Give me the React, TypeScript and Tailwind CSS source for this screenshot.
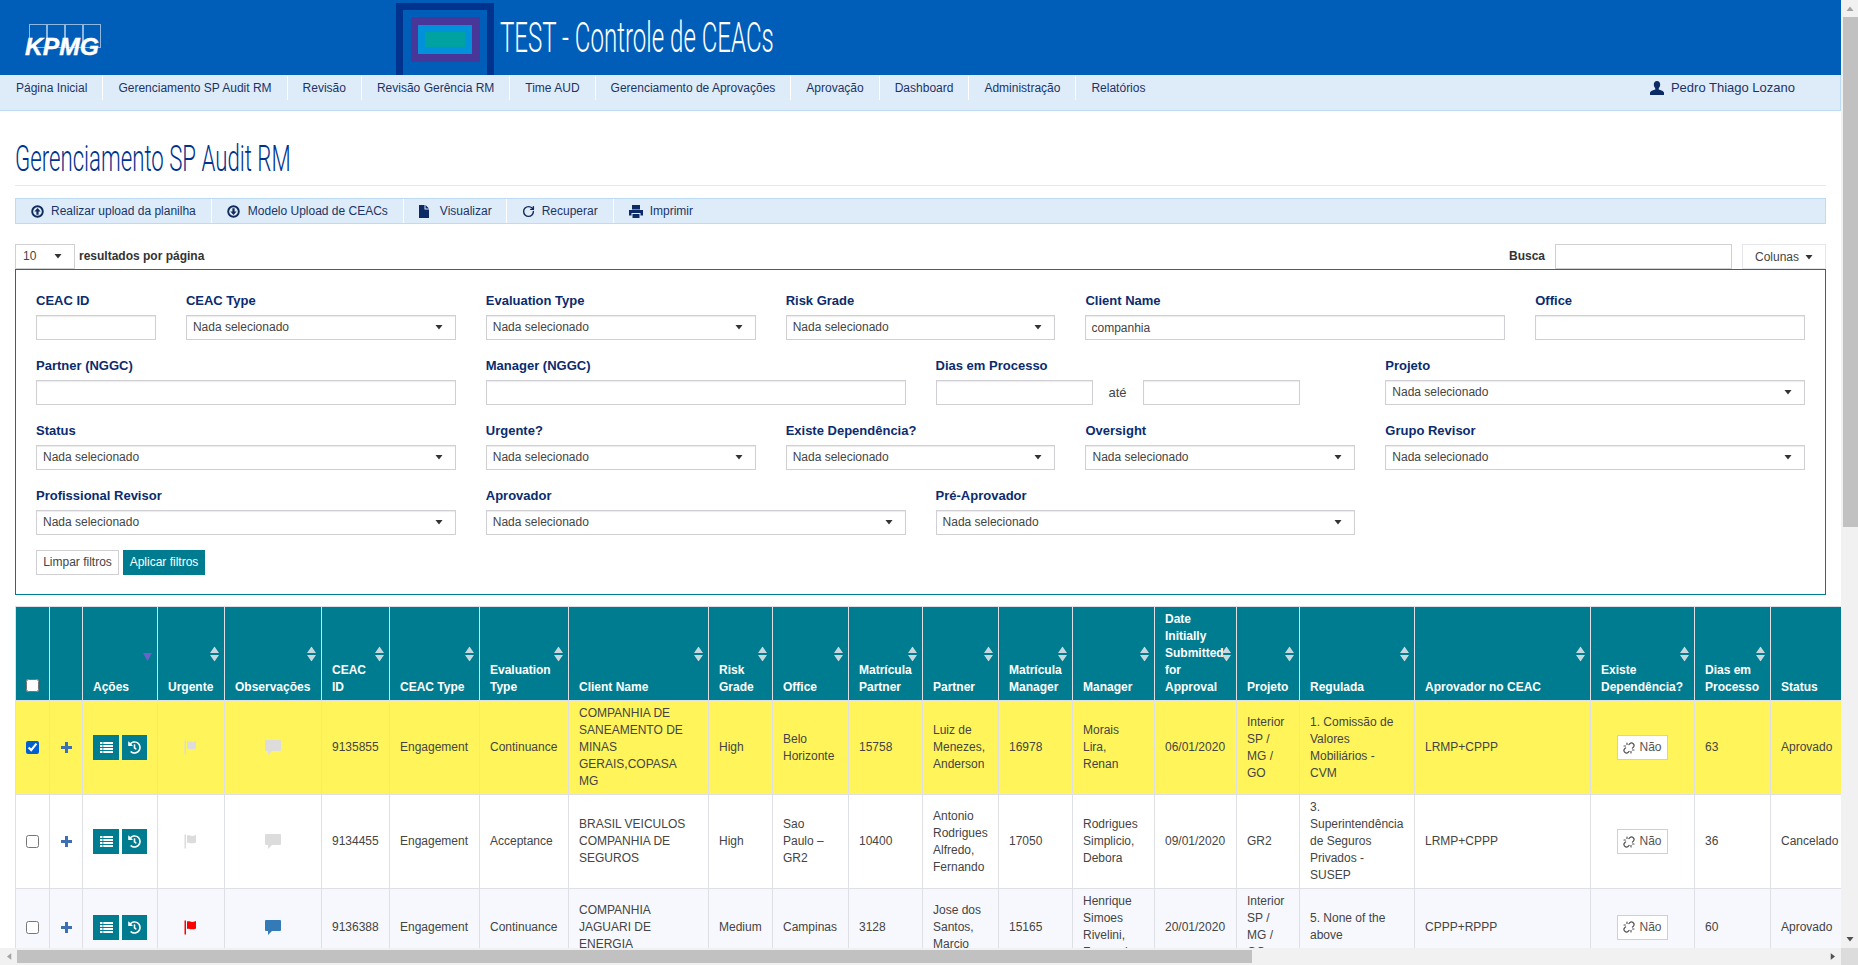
import React from "react";
import { RotateCw, Unlink } from "lucide-react";
import { FaHistory } from "react-icons/fa";

const navItems = ["Página Inicial","Gerenciamento SP Audit RM","Revisão","Revisão Gerência RM","Time AUD","Gerenciamento de Aprovações","Aprovação","Dashboard","Administração","Relatórios"];

function Caret({ className = "" }: { className?: string }) {
  return <svg width="8" height="5" viewBox="0 0 8 5" className={className}><path d="M0.500 0h7L4 4.500z" fill="currentColor" /></svg>;
}
function CircleArrow({ down }: { down?: boolean }) {
  return (
    <svg width="13" height="13" viewBox="0 0 13 13">
      <circle cx="6.5" cy="6.5" r="5.3" fill="none" stroke="#0f2a5c" strokeWidth="1.9" />
      <path d={down ? "M6.5 10L3.4 6.6h2V3.2h2.2v3.4h2z" : "M6.5 3L3.4 6.4h2v3.4h2.2V6.4h2z"} fill="#0f2a5c" />
    </svg>
  );
}
function FileIcon() {
  return <svg width="10" height="13" viewBox="0 0 10 13"><path d="M0 0h5.500v4.500H10V13H0zM6.500 0L10 3.500H6.500z" fill="#0b2a66" /></svg>;
}
function PrintIcon() {
  return (
    <svg width="14" height="13" viewBox="0 0 14 13">
      <path d="M3 0h8v4.500H3zM0 5h14v5.500h-2.500V8h-9v2.500H0zM3.500 9h7v4h-7z" fill="#0b2a66" />
    </svg>
  );
}
function UserIcon() {
  return <svg width="14" height="14" viewBox="0 0 14 14"><path d="M7 0c2 0 3.200 1.500 3.200 3.600 0 1.700-.8 3-1.500 3.800v1.200c1.800.7 4.300 1.300 5.300 2.800V14H0v-2.600c1-1.500 3.500-2.100 5.300-2.800V7.400C4.600 6.600 3.800 5.300 3.800 3.600 3.800 1.500 5 0 7 0z" fill="#0b2a66" /></svg>;
}
function Flag({ color }: { color: string }) {
  return (
    <svg width="15" height="15" viewBox="0 0 15 15" className="mx-auto">
      <rect x="0.500" y="0.500" width="1.500" height="14" fill={color} />
      <path d="M3 1.500c2-.8 3.500.6 5.500.4 1.500-.1 2.500-.5 3.500-.9v7.500c-1.500.8-3 1-4.500.8-2-.3-3-1-4.500-.4z" fill={color} />
    </svg>
  );
}
function Comment({ color }: { color: string }) {
  return <svg width="16" height="15" viewBox="0 0 16 15" className="mx-auto"><path d="M1 0h14a1 1 0 0 1 1 1v9a1 1 0 0 1-1 1H7l-4 4v-4H1a1 1 0 0 1-1-1V1a1 1 0 0 1 1-1z" fill={color} /></svg>;
}
function ListIcon() {
  return (
    <svg width="13" height="11" viewBox="0 0 13 11">
      <path d="M0 0h13v2H0zM0 3h13v2H0zM0 6h13v2H0zM0 9h13v2H0z" fill="#fff" />
      <path d="M2.500 0h.8v11h-.8z" fill="#007c91" />
    </svg>
  );
}
function PlusIcon() {
  return <svg width="11" height="11" viewBox="0 0 11 11" className="block"><path d="M4 0h3v4h4v3H7v4H4V7H0V4h4z" fill="#3d70b2" /></svg>;
}
function Sort() {
  return (
    <svg width="9" height="15" viewBox="0 0 9 15" className="absolute right-[5px] top-1/2 -translate-y-1/2">
      <path d="M4.500 0L9 6.500H0zM0 8.500h9L4.500 15z" fill="#c6d8de" />
    </svg>
  );
}

function Select({ text = "Nada selecionado" }: { text?: string }) {
  return (
    <div className="h-[25px] flex items-center justify-between pl-[6px] pr-[12px] border border-[#cfcfd4] bg-white shadow-[inset_0_1px_1px_rgba(0,0,0,0.08)] text-[#444]">
      <span>{text}</span>
      <Caret className="text-[#333]" />
    </div>
  );
}
function Input({ value, className = "" }: { value?: string; className?: string }) {
  return <input readOnly value={value ?? ""} className={`h-[25px] w-full px-[5px] border border-[#cfcfd4] bg-white shadow-[inset_0_1px_1px_rgba(0,0,0,0.08)] text-[#444] outline-none ${className}`} />;
}
function Field({ label, span, children }: { label: string; span: string; children: React.ReactNode }) {
  return (
    <div className={`${span} h-[65px]`}>
      <label className="block h-[24px] pt-[1px] leading-[18px] text-[13px] font-bold text-[#0a2c6e]">{label}</label>
      {children}
    </div>
  );
}

const columns: { label: string; w: string; sort?: boolean }[] = [
  { label: "", w: "w-[34px]" },
  { label: "", w: "w-[33px]" },
  { label: "Ações", w: "w-[75px]" },
  { label: "Urgente", w: "w-[67px]", sort: true },
  { label: "Observações", w: "w-[97px]", sort: true },
  { label: "CEAC\nID", w: "w-[68px]", sort: true },
  { label: "CEAC Type", w: "w-[90px]", sort: true },
  { label: "Evaluation\nType", w: "w-[89px]", sort: true },
  { label: "Client Name", w: "w-[140px]", sort: true },
  { label: "Risk\nGrade", w: "w-[64px]", sort: true },
  { label: "Office", w: "w-[76px]", sort: true },
  { label: "Matrícula\nPartner", w: "w-[74px]", sort: true },
  { label: "Partner", w: "w-[76px]", sort: true },
  { label: "Matrícula\nManager", w: "w-[74px]", sort: true },
  { label: "Manager", w: "w-[82px]", sort: true },
  { label: "Date\nInitially\nSubmitted\nfor\nApproval", w: "w-[82px]", sort: true },
  { label: "Projeto", w: "w-[63px]", sort: true },
  { label: "Regulada", w: "w-[115px]", sort: true },
  { label: "Aprovador no CEAC", w: "w-[176px]", sort: true },
  { label: "Existe\nDependência?", w: "w-[104px]", sort: true },
  { label: "Dias em\nProcesso", w: "w-[76px]", sort: true },
  { label: "Status", w: "w-[120px]", sort: true },
];

const rows = [
  { bg: "bg-[#fff55a]", checked: true, flag: "#dcdcdc", comment: "#dcdcdc", cells: ["9135855","Engagement","Continuance","COMPANHIA DE\nSANEAMENTO DE\nMINAS\nGERAIS,COPASA\nMG","High","Belo\nHorizonte","15758","Luiz de\nMenezes,\nAnderson","16978","Morais\nLira,\nRenan","06/01/2020","Interior\nSP /\nMG /\nGO","1. Comissão de\nValores\nMobiliários -\nCVM","LRMP+CPPP"], tail: ["63","Aprovado"] },
  { bg: "bg-white", checked: false, flag: "#dcdcdc", comment: "#dcdcdc", cells: ["9134455","Engagement","Acceptance","BRASIL VEICULOS\nCOMPANHIA DE\nSEGUROS","High","Sao\nPaulo –\nGR2","10400","Antonio\nRodrigues\nAlfredo,\nFernando","17050","Rodrigues\nSimplicio,\nDebora","09/01/2020","GR2","3.\nSuperintendência\nde Seguros\nPrivados -\nSUSEP","LRMP+CPPP"], tail: ["36","Cancelado"] },
  { bg: "bg-[#f7f8fd]", checked: false, flag: "#ff0000", comment: "#337ab7", cells: ["9136388","Engagement","Continuance","COMPANHIA\nJAGUARI DE\nENERGIA","Medium","Campinas","3128","Jose dos\nSantos,\nMarcio","15165","Henrique\nSimoes\nRivelini,\nFernando","20/01/2020","Interior\nSP /\nMG /\nGO","5. None of the\nabove","CPPP+RPPP"], tail: ["60","Aprovado"] },
];

const cell = "border border-[#dfe0e6] py-1 align-middle whitespace-pre-line";
const td = `${cell} px-[10px]`;

const tools = [
  { icon: <CircleArrow />, t: "Realizar upload da planilha", slot: "w-[20px]", pad: "pr-[15px]" },
  { icon: <CircleArrow down />, t: "Modelo Upload de CEACs", slot: "w-[21px]", pad: "pr-[15px]" },
  { icon: <FileIcon />, t: "Visualizar", slot: "w-[21px]", pad: "pr-[14px]" },
  { icon: <RotateCw size={13} strokeWidth={2.6} color="#0f2a5c" />, t: "Recuperar", slot: "w-[20px]", pad: "pr-[15px]" },
  { icon: <PrintIcon />, t: "Imprimir", slot: "w-[21px]", pad: "pr-[15px]" },
];

export default function App() {
  return (
    <div className="h-screen flex flex-col overflow-hidden bg-white font-['Liberation_Sans',Arial,sans-serif] text-[12px] leading-[17px] text-[#444]">
      <div className="flex-1 min-h-0 flex">
        <main className="w-[1841px] shrink-0 overflow-hidden">
          <header className="h-[75px] bg-[#005eb8] flex items-end">
            <svg width="82" height="34" viewBox="0 0 82 34" className="ml-[24px] mb-[17px] shrink-0 overflow-visible">
              <g fill="none" stroke="#8fb7e0" strokeWidth="1">
                <rect x="5.500" y="0.500" width="17" height="23" />
                <rect x="23.500" y="0.500" width="17" height="23" />
                <rect x="41.500" y="0.500" width="17" height="23" />
                <rect x="59.500" y="0.500" width="17" height="23" />
              </g>
              <text x="1" y="31" textLength="74" lengthAdjust="spacingAndGlyphs" fontFamily="'Liberation Sans',sans-serif" fontWeight="700" fontStyle="italic" fontSize="23" fill="#fff" stroke="#fff" strokeWidth="0.4">KPMG</text>
            </svg>
            <svg width="98" height="72" viewBox="0 0 98 72" className="ml-[290px] shrink-0">
              <rect width="98" height="72" fill="#00338d" />
              <rect x="7" y="7" width="84" height="65" fill="#005eb8" />
              <rect x="15" y="14" width="69" height="45" fill="#483698" />
              <rect x="22" y="22" width="54" height="29" fill="#0091da" />
              <rect x="29" y="29" width="40" height="15" fill="#00a3a1" />
            </svg>
            <h1 className="ml-[6px] self-center inline-block origin-left scale-x-[0.573] whitespace-nowrap font-['Roboto',sans-serif] font-light text-[42px] leading-[48px] text-white">TEST - Controle de CEACs</h1>
          </header>

          <nav className="h-[36px] pt-[1px] pl-[1px] flex items-start bg-[#deecf9] border-b border-r border-[#bcdcf5] text-[#1b3468]">
            {navItems.map((n, i) => (
              <a key={n} className={`h-[24px] flex items-center px-[15px] ${i < navItems.length - 1 ? "border-r border-white" : ""}`}>{n}</a>
            ))}
            <div className="ml-auto mr-[45px] h-[23px] flex items-center gap-[7px] text-[13px]">
              <UserIcon />
              <span>Pedro Thiago Lozano</span>
            </div>
          </nav>

          <div className="pl-[15px] pr-[15px]">
            <div className="h-[75px] flex items-end pb-[4px] border-b border-[#e6e8ee]">
              <h2 className="inline-block origin-left scale-x-[0.617] whitespace-nowrap font-['Roboto',sans-serif] font-light text-[36px] leading-[44px] text-[#00338d]">Gerenciamento SP Audit RM</h2>
            </div>

            <div className="mt-[12px] h-[26px] flex bg-[#deecf9] border border-[#bcdcf5] text-[#1b3468]">
              {tools.map((b, i) => (
                <div key={b.t} className={`flex items-center pl-[15px] ${b.pad} ${i < 4 ? "border-r border-white" : ""}`}>
                  <span className={`${b.slot} flex items-center`}>{b.icon}</span>
                  <span>{b.t}</span>
                </div>
              ))}
            </div>

            <div className="mt-[20px] h-[25px] flex items-center">
              <div className="h-[25px] w-[60px] flex items-center justify-between pl-[7px] pr-[12px] border border-[#cfcfd4] bg-white text-[#444]">
                <span>10</span><Caret className="text-[#333]" />
              </div>
              <span className="ml-[4px] font-bold text-[#333]">resultados por página</span>
              <span className="ml-auto mr-[10px] font-bold text-[#333]">Busca</span>
              <input readOnly className="h-[25px] w-[177px] border border-[#cfcfd4] bg-white outline-none" />
              <button className="ml-[10px] h-[25px] w-[84px] pt-[1px] flex items-center justify-center gap-[6px] border border-[#e4e6ec] bg-white text-[#444]">
                Colunas <Caret className="text-[#333]" />
              </button>
            </div>

            <section className="h-[326px] border border-[#007c91] pl-[20px] pr-[19.9px] pt-[21px]">
              <div className="grid grid-cols-12 gap-x-[30px]">
                <Field label="CEAC ID" span="col-span-1"><Input /></Field>
                <Field label="CEAC Type" span="col-span-2"><Select /></Field>
                <Field label="Evaluation Type" span="col-span-2"><Select /></Field>
                <Field label="Risk Grade" span="col-span-2"><Select /></Field>
                <Field label="Client Name" span="col-span-3"><Input value="companhia" /></Field>
                <Field label="Office" span="col-span-2"><Input /></Field>

                <Field label="Partner (NGGC)" span="col-span-3"><Input /></Field>
                <Field label="Manager (NGGC)" span="col-span-3"><Input /></Field>
                <Field label="Dias em Processo" span="col-span-3">
                  <div className="flex items-center w-[364px]">
                    <Input className="w-[157px]" />
                    <span className="w-[50px] shrink-0 text-center text-[13px] text-[#444]">até</span>
                    <Input className="w-[157px]" />
                  </div>
                </Field>
                <Field label="Projeto" span="col-span-3"><Select /></Field>

                <Field label="Status" span="col-span-3"><Select /></Field>
                <Field label="Urgente?" span="col-span-2"><Select /></Field>
                <Field label="Existe Dependência?" span="col-span-2"><Select /></Field>
                <Field label="Oversight" span="col-span-2"><Select /></Field>
                <Field label="Grupo Revisor" span="col-span-3"><Select /></Field>

                <Field label="Profissional Revisor" span="col-span-3"><Select /></Field>
                <Field label="Aprovador" span="col-span-3"><Select /></Field>
                <Field label="Pré-Aprovador" span="col-span-3"><Select /></Field>
              </div>
              <div className="flex gap-[4px] -mt-[1px]">
                <button className="h-[25px] w-[83px] border border-[#cfcfd4] bg-white text-[#444]">Limpar filtros</button>
                <button className="h-[25px] w-[82px] bg-[#007c91] text-white">Aplicar filtros</button>
              </div>
            </section>
          </div>

          <div className="mt-[11px] pl-[15px] overflow-hidden">
            <table className="table-fixed border-collapse w-[1875px] max-w-none">
              <colgroup>
                {columns.map((c, i) => <col key={i} className={c.w} />)}
              </colgroup>
              <thead>
                <tr className="bg-[#007c91] text-white">
                  {columns.map((c, i) => (
                    <th key={i} className="relative border border-[#dfe0e6] px-[10px] py-1 align-bottom text-left font-bold whitespace-pre-line">
                      {i === 0 ? <input type="checkbox" readOnly className="block mx-auto mb-[4px]" /> : c.label}
                      {c.sort && <Sort />}
                      {i === 2 && (
                        <svg width="9" height="8" viewBox="0 0 9 8" className="absolute right-[5px] top-[46px]"><path d="M0 0h9L4.500 8z" fill="#6a62c9" /></svg>
                      )}
                    </th>
                  ))}
                </tr>
              </thead>
              <tbody>
                {rows.map((r) => (
                  <tr key={r.cells[0]} className={r.bg}>
                    <td className={`${cell} text-center`}>
                      <input type="checkbox" readOnly checked={r.checked} className="align-middle accent-[#0060d0]" />
                    </td>
                    <td className={`${cell} pl-[11px]`}><PlusIcon /></td>
                    <td className={cell}>
                      <div className="flex justify-center gap-[3px]">
                        <span className="w-[26px] h-[25px] flex items-center justify-center bg-[#007c91]"><ListIcon /></span>
                        <span className="w-[25px] h-[25px] flex items-center justify-center bg-[#007c91]"><FaHistory size={13} color="#fff" /></span>
                      </div>
                    </td>
                    <td className={cell}><Flag color={r.flag} /></td>
                    <td className={cell}><Comment color={r.comment} /></td>
                    {r.cells.map((c, i) => <td key={i} className={td}>{c}</td>)}
                    <td className={cell}>
                      <div className="mx-auto w-[51px] h-[25px] flex items-center justify-center gap-[4px] border border-[#cfcfd4] bg-white text-[#555]">
                        <Unlink size={12} strokeWidth={2.4} color="#555" />Não
                      </div>
                    </td>
                    {r.tail.map((c) => <td key={c} className={td}>{c}</td>)}
                  </tr>
                ))}
              </tbody>
            </table>
          </div>
        </main>

        <aside className="w-[17px] bg-[#f1f1f1] flex flex-col items-end">
          <div className="h-[17px] w-full flex items-center justify-center text-[#a3a3a3]"><Caret className="rotate-180" /></div>
          <div className="h-[510px] w-[15px] bg-[#c1c1c1]" />
          <div className="mt-auto h-[17px] w-full flex items-center justify-center text-[#505050]"><Caret /></div>
        </aside>
      </div>

      <div className="h-[17px] shrink-0 flex bg-[#f1f1f1]">
        <div className="w-[17px] flex items-center justify-center text-[#a3a3a3]"><Caret className="rotate-90" /></div>
        <div className="w-[1235px] h-[13px] mt-[2px] bg-[#c1c1c1]" />
        <div className="w-[589px] flex items-center justify-end pr-[4px] text-[#505050]"><Caret className="-rotate-90" /></div>
        <div className="w-[17px] bg-[#dcdcdc]" />
      </div>
    </div>
  );
}
